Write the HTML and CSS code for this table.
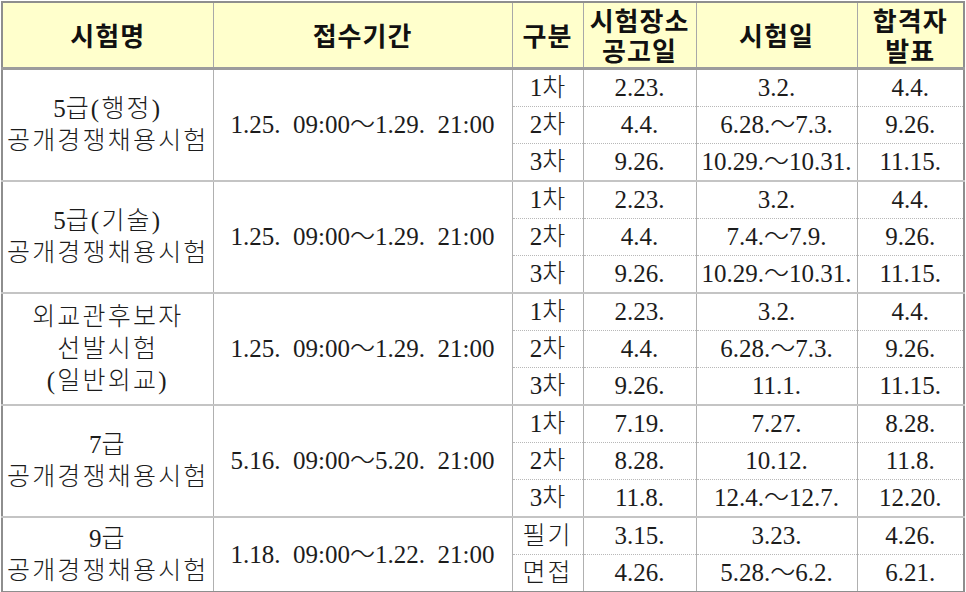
FILE: index.html
```html
<!DOCTYPE html>
<html lang="ko">
<head>
<meta charset="utf-8">
<title>시험 일정</title>
<link rel="stylesheet" href="styles.css">
</head>
<body>
<table class="schedule">
  <colgroup>
    <col class="c-name"><col class="c-period"><col class="c-kind"><col class="c-notice"><col class="c-date"><col class="c-result">
  </colgroup>
  <thead>
    <tr>
      <th>시험명</th>
      <th>접수기간</th>
      <th>구분</th>
      <th><span class="hl">시험장소</span><span class="hl">공고일</span></th>
      <th>시험일</th>
      <th><span class="hl">합격자</span><span class="hl">발표</span></th>
    </tr>
  </thead>
  <tbody class="group">
    <tr><td rowspan="3" class="name">5<span class="ko">급(행정)</span><br><span class="ko">공개경쟁채용시험</span></td><td rowspan="3" class="period">1.25.&nbsp; 09:00～1.29.&nbsp; 21:00</td><td>1차</td><td>2.23.</td><td>3.2.</td><td>4.4.</td></tr>
    <tr><td>2차</td><td>4.4.</td><td>6.28.～7.3.</td><td>9.26.</td></tr>
    <tr><td>3차</td><td>9.26.</td><td>10.29.～10.31.</td><td>11.15.</td></tr>
  </tbody>
  <tbody class="group">
    <tr><td rowspan="3" class="name">5<span class="ko">급(기술)</span><br><span class="ko">공개경쟁채용시험</span></td><td rowspan="3" class="period">1.25.&nbsp; 09:00～1.29.&nbsp; 21:00</td><td>1차</td><td>2.23.</td><td>3.2.</td><td>4.4.</td></tr>
    <tr><td>2차</td><td>4.4.</td><td>7.4.～7.9.</td><td>9.26.</td></tr>
    <tr><td>3차</td><td>9.26.</td><td>10.29.～10.31.</td><td>11.15.</td></tr>
  </tbody>
  <tbody class="group">
    <tr><td rowspan="3" class="name"><span class="ko">외교관후보자</span><br><span class="ko">선발시험</span><br><span class="ko">(일반외교)</span></td><td rowspan="3" class="period">1.25.&nbsp; 09:00～1.29.&nbsp; 21:00</td><td>1차</td><td>2.23.</td><td>3.2.</td><td>4.4.</td></tr>
    <tr><td>2차</td><td>4.4.</td><td>6.28.～7.3.</td><td>9.26.</td></tr>
    <tr><td>3차</td><td>9.26.</td><td>11.1.</td><td>11.15.</td></tr>
  </tbody>
  <tbody class="group">
    <tr><td rowspan="3" class="name">7<span class="ko">급</span><br><span class="ko">공개경쟁채용시험</span></td><td rowspan="3" class="period">5.16.&nbsp; 09:00～5.20.&nbsp; 21:00</td><td>1차</td><td>7.19.</td><td>7.27.</td><td>8.28.</td></tr>
    <tr><td>2차</td><td>8.28.</td><td>10.12.</td><td>11.8.</td></tr>
    <tr><td>3차</td><td>11.8.</td><td>12.4.～12.7.</td><td>12.20.</td></tr>
  </tbody>
  <tbody class="group">
    <tr><td rowspan="2" class="name">9<span class="ko">급</span><br><span class="ko">공개경쟁채용시험</span></td><td rowspan="2" class="period">1.18.&nbsp; 09:00～1.22.&nbsp; 21:00</td><td><span class="ko-s">필기</span></td><td>3.15.</td><td>3.23.</td><td>4.26.</td></tr>
    <tr><td><span class="ko-s">면접</span></td><td>4.26.</td><td>5.28.～6.2.</td><td>6.21.</td></tr>
  </tbody>
</table>
</body>
</html>
```
FILE: styles.css
```css
html, body {
  margin: 0;
  padding: 0;
  background: #ffffff;
}

body {
  padding: 1px 0 0 1px;
}

.schedule {
  border-collapse: collapse;
  table-layout: fixed;
  width: 962px;
  border: 2px solid #8e8e8e;
  font-family: "Liberation Serif", "Noto Sans CJK KR", serif;
  font-size: 25px;
  color: #1c1c1c;
}

.c-name { width: 211px; }
.c-period { width: 299px; }
.c-kind { width: 71px; }
.c-notice { width: 113px; }
.c-date { width: 161px; }
.c-result { width: 107px; }

.schedule th {
  background: #ffffcc;
  font-family: "Noto Sans CJK KR", sans-serif;
  font-weight: 700;
  font-size: 26px;
  line-height: 30px;
  height: 64px;
  padding: 0;
  color: #111;
  border-left: 1px solid #a8a8a8;
  border-right: 1px solid #a8a8a8;
  border-bottom: 3px solid #9c9c9c;
  vertical-align: middle;
  text-align: center;
  letter-spacing: 1px;
}

.schedule th .hl {
  display: block;
  height: 30px;
  line-height: 30px;
}

.schedule td {
  height: 36px;
  padding: 0;
  font-weight: 300;
  text-align: center;
  vertical-align: middle;
  white-space: nowrap;
  line-height: 30px;
  border-left: 1px solid #b0b0b0;
  border-right: 1px solid #b0b0b0;
  border-top: 1px dotted #b8b8b8;
}

.schedule tbody.group tr:first-child td {
  border-top: 2px solid #c4c4c4;
}

.schedule thead + tbody.group tr:first-child td {
  border-top: 3px solid #9c9c9c;
}

.schedule td.name {
  line-height: 32px;
}

.ko {
  letter-spacing: 2.2px;
}

.ko-s {
  letter-spacing: 2px;
}
```
